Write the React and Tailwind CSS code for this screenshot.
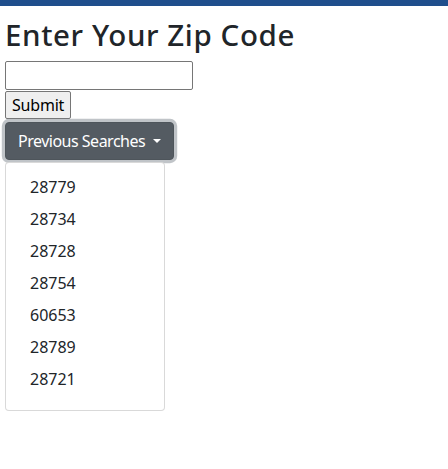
export default function App() {
  const zips = ['28779', '28734', '28728', '28754', '60653', '28789', '28721'];

  return (
    <div className="min-h-[469px] bg-white text-[#212529] font-['Noto_Sans',sans-serif]">
      {/* Top bar */}
      <div className="h-[6px] bg-[#1f4e8c]" />

      <div className="px-[5px] pt-[12px]">
        <h1 className="text-[29.5px] leading-[34px] font-medium mb-[9px] tracking-[0.6px]">Enter Your Zip Code</h1>

        <input
          type="text"
          className="block w-[188px] h-[29px] border border-[#767676] rounded-[2px] bg-white px-1 outline-none"
        />
        <button className="block h-[28px] px-[6px] mt-px text-base leading-6 tracking-[-0.2px] bg-[#efefef] border border-[#767676] rounded-[2px] text-black">
          Submit
        </button>

        {/* Dropdown */}
        <div className="mt-[3px]">
          <button className="flex items-center h-[38px] px-3 text-base leading-6 tracking-[-0.5px] text-white bg-[#545b62] border border-[#4e555b] rounded shadow-[0_0_0_3.2px_rgba(130,138,145,0.5)]">
            Previous Searches
            <span className="ml-[8px] w-0 h-0 border-t-[4.8px] border-t-white border-x-[4.8px] border-x-transparent" />
          </button>
          <div className="mt-[2px] w-[160px] border border-[rgba(0,0,0,0.15)] rounded bg-white pt-2 pb-[15px]">
            {zips.map((z) => (
              <div key={z} className="px-6 py-1 text-base leading-6 text-[#212529]">
                {z}
              </div>
            ))}
          </div>
        </div>
      </div>
    </div>
  );
}
